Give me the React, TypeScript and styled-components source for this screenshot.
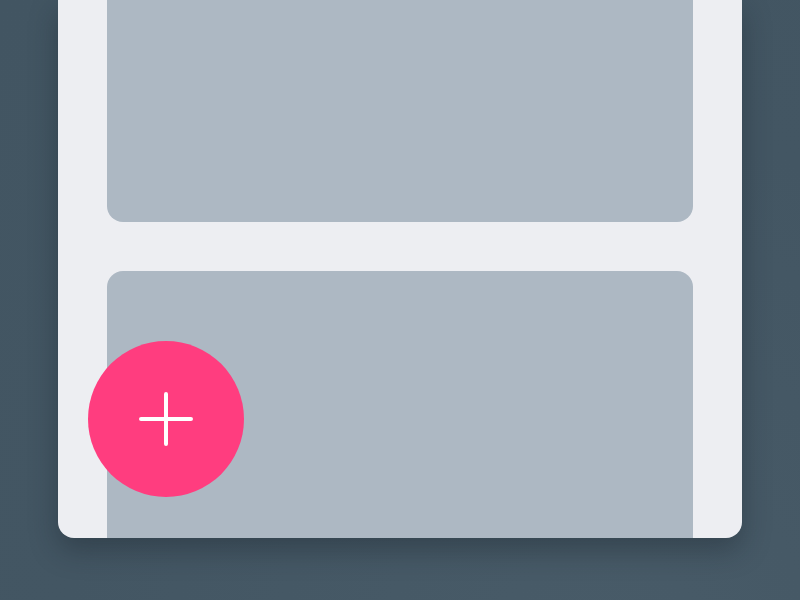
import { FC } from 'react'
import styled, { createGlobalStyle } from 'styled-components'

const GlobalStyle = createGlobalStyle`
  html, body {
    margin: 0;
    padding: 0;
    height: 100%;
    overflow: hidden;
  }
  body {
    background: #435663;
    font-family: "Roboto", "Liberation Sans", sans-serif;
  }
`

const Stage = styled.div`
  width: 800px;
  height: 600px;
  background: radial-gradient(circle at 75% 110%, #485b68 0%, #435663 60%, #425562 100%);
  padding-left: 58px;
  box-sizing: border-box;
`

const Panel = styled.div`
  position: relative;
  width: 684px;
  height: 538px;
  box-sizing: border-box;
  padding: 0 49px;
  display: flex;
  flex-direction: column;
  gap: 49px;
  background: #edeef2;
  border-radius: 0 0 16px 16px;
  box-shadow: 0 12px 28px rgba(20, 30, 38, 0.35);
  overflow: hidden;
`

const Card = styled.div<{ $edge: 'top' | 'bottom' }>`
  background: #adb8c3;
  border-radius: ${({ $edge }) => ($edge === 'top' ? '0 0 16px 16px' : '16px 16px 0 0')};
  height: ${({ $edge }) => ($edge === 'top' ? '222px' : 'auto')};
  flex: ${({ $edge }) => ($edge === 'top' ? '0 0 auto' : '1 1 auto')};
`

const Fab = styled.button`
  position: absolute;
  left: 30px;
  top: 341px;
  width: 156px;
  height: 156px;
  border: none;
  border-radius: 50%;
  background: #ff3d7f;
  padding: 0;
  display: flex;
  align-items: center;
  justify-content: center;
  cursor: pointer;
`

const PlusIcon: FC = () => (
  <svg width="54" height="54" viewBox="0 0 54 54" fill="none">
    <path d="M27 2 V52 M2 27 H52" stroke="#ffffff" strokeWidth="4" strokeLinecap="round" />
  </svg>
)

const App: FC = () => {
  return (
    <>
      <GlobalStyle />
      <Stage>
        <Panel>
          <Card $edge="top" />
          <Card $edge="bottom" />
          <Fab aria-label="Add">
            <PlusIcon />
          </Fab>
        </Panel>
      </Stage>
    </>
  )
}

export default App
